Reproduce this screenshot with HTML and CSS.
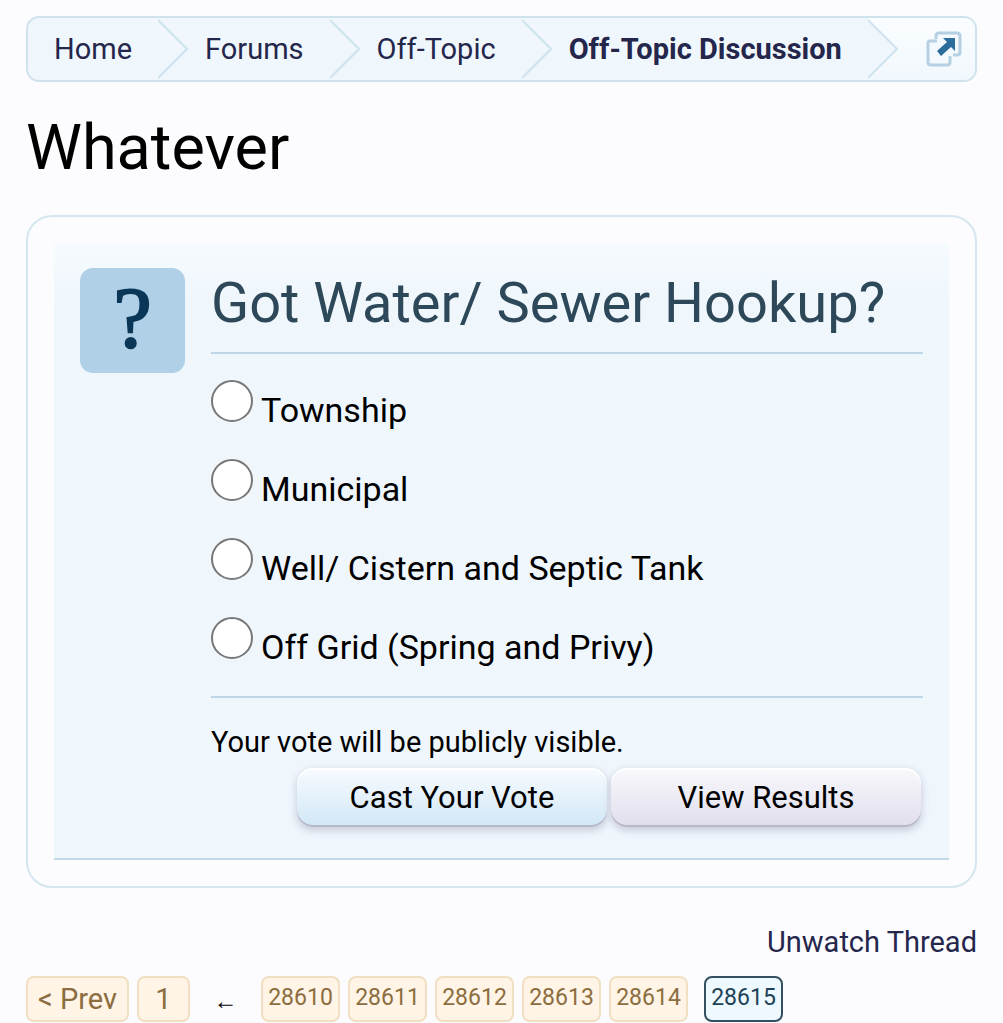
FILE: index.html
```html
<!DOCTYPE html>
<html lang="en">
<head>
    <meta charset="UTF-8">
    <meta name="viewport" content="width=device-width, initial-scale=1.0">
    <title>Whatever</title>
    <link rel="stylesheet" href="styles.css">
</head>
<body>
    <nav class="breadcrumb">
        <a class="crumb" href="#">Home</a>
        <svg class="arrow" viewBox="0 0 30 60"><path d="M0 1 L29 30 L0 59"/></svg>
        <a class="crumb" href="#">Forums</a>
        <svg class="arrow" viewBox="0 0 30 60"><path d="M0 1 L29 30 L0 59"/></svg>
        <a class="crumb" href="#">Off-Topic</a>
        <svg class="arrow" viewBox="0 0 30 60"><path d="M0 1 L29 30 L0 59"/></svg>
        <a class="crumb current" href="#">Off-Topic Discussion</a>
        <div class="jump">
            <svg class="arrow" viewBox="0 0 30 60"><path class="fill" d="M0 0 L29 30 L0 60"/><path d="M0 1 L29 30 L0 59"/></svg>
            <a class="open" href="#" aria-label="Open quick navigation">
                <svg viewBox="0 0 36 36">
                    <path class="pane" d="M10 8 V5 Q10 2 13 2 H31 Q34 2 34 5 V21 Q34 24 31 24 H27"/>
                    <path class="pane" d="M11 10 H4 Q2 10 2 12 V31 Q2 34 5 34 H21 Q24 34 24 31 V25"/>
                    <path class="point" d="M17 7 H29 V20 L25 16 L15 25 L11 20 L21 11 Z"/>
                </svg>
            </a>
        </div>
    </nav>

    <h1>Whatever</h1>

    <section class="panel">
        <form class="poll">
            <div class="question">?</div>
            <div class="content">
                <h2>Got Water/ Sewer Hookup?</h2>
                <div class="options">
                    <label><input type="radio" name="vote" value="1">Township</label>
                    <label><input type="radio" name="vote" value="2">Municipal</label>
                    <label><input type="radio" name="vote" value="3">Well/ Cistern and Septic Tank</label>
                    <label><input type="radio" name="vote" value="4">Off Grid (Spring and Privy)</label>
                </div>
                <p>Your vote will be publicly visible.</p>
                <div class="buttons">
                    <button class="cast" type="button">Cast Your Vote</button>
                    <button type="button">View Results</button>
                </div>
            </div>
        </form>
    </section>

    <div class="links"><a href="#">Unwatch Thread</a></div>

    <nav class="pages">
        <a class="text" href="#">&lt; Prev</a>
        <a class="text first" href="#">1</a>
        <span>←</span>
        <a href="#">28610</a>
        <a href="#">28611</a>
        <a href="#">28612</a>
        <a href="#">28613</a>
        <a href="#">28614</a>
        <a class="active" href="#">28615</a>
    </nav>
</body>
</html>
```
FILE: styles.css
```css
* {
    margin: 0px;
    padding: 0px;
    box-sizing: border-box;
}

body {
    background-color: #fcfcff;
    color: #000;
    font-family: Roboto, "Liberation Sans", sans-serif;
    font-size: 29px;
    padding: 16px 26px 0px;
}

a {
    color: #25264b;
    text-decoration: none;
}

.breadcrumb {
    display: flex;
    align-items: center;
    height: 66px;
    border: 2px solid #d0e3ed;
    border-radius: 13px;
    background-color: #eff6fc;
    overflow: hidden;
}

.crumb {
    padding: 0px 26px 0px 17px;
    white-space: nowrap;
}

.crumb:first-child {
    padding-left: 26px;
}

.current {
    font-weight: bold;
}

.arrow {
    flex: none;
    width: 30px;
    height: 60px;
    fill: none;
    stroke: #cfe3ef;
    stroke-width: 2;
}

.arrow .fill {
    fill: #eff6fc;
    stroke: none;
}

.jump {
    display: flex;
    flex: 1;
    align-items: center;
    justify-content: space-between;
    align-self: stretch;
    padding-right: 13px;
    background: linear-gradient(#fafdff, #f1f8fd);
}

.open svg {
    display: block;
    width: 36px;
    height: 36px;
}

.pane {
    fill: #f3f9fd;
    stroke: #b4d0e2;
    stroke-width: 3;
}

.point {
    fill: #2b6d9b;
}

h1 {
    margin-top: 28px;
    font-size: 63px;
    font-weight: normal;
    line-height: 76px;
}

.panel {
    margin-top: 29px;
    padding: 26px;
    border: 2px solid #d5e7ee;
    border-radius: 26px;
}

.poll {
    display: flex;
    gap: 26px;
    padding: 25px 26px 26px;
    border-bottom: 2px solid #bfd9e6;
    background: linear-gradient(#f5fbfe, #eff6fc 64px);
}

.question {
    flex: none;
    width: 105px;
    height: 105px;
    border-radius: 13px;
    background-color: #b0d0e7;
    color: #0a3657;
    font-family: "Liberation Serif", serif;
    font-size: 86px;
    line-height: 101px;
    text-align: center;
    -webkit-text-stroke: 2px #0a3657;
}

.content {
    flex: 1;
}

h2 {
    padding-bottom: 14px;
    border-bottom: 2px solid #bdd7e7;
    color: #2d4858;
    font-size: 56px;
    font-weight: normal;
    line-height: 70px;
}

.options {
    display: flex;
    flex-direction: column;
    gap: 37px;
    padding: 26px 0px 37px;
    border-bottom: 2px solid #bdd7e7;
}

.options label {
    display: flex;
    align-items: baseline;
    gap: 8px;
    height: 42px;
    font-size: 34px;
    line-height: 42px;
}

.options input {
    flex: none;
    appearance: none;
    width: 42px;
    height: 42px;
    border: 2px solid #777;
    border-radius: 50%;
    background-color: #fff;
}

.options input:checked {
    box-shadow: inset 0px 0px 0px 8px #fff;
    background-color: #2b6d9b;
}

p {
    padding-top: 26px;
    line-height: 36px;
}

.buttons {
    display: flex;
    justify-content: flex-end;
    gap: 4px;
    padding: 8px 2px 5px 0px;
}

button {
    width: 310px;
    height: 59px;
    border: none;
    border-radius: 16px;
    background: linear-gradient(#f9f8fc, #e0deec);
    box-shadow: inset 0px 2px 0px #fff, inset 0px -2px 0px #b8b8c8, 0px 3px 8px #c3c6d6;
    color: #000;
    font-family: inherit;
    font-size: 31px;
}

button.cast {
    background: linear-gradient(#f8fbfe, #d0e7f6);
}

.links {
    margin-top: 35px;
    line-height: 38px;
    text-align: right;
}

.pages {
    display: flex;
    gap: 8px;
    margin-top: 15px;
}

.pages a {
    min-width: 79px;
    height: 46px;
    border: 2px solid #f0dfc3;
    border-radius: 8px;
    background-color: #fff4e5;
    color: #8b6d3f;
    font-size: 23px;
    line-height: 40px;
    text-align: center;
}

.pages .text {
    min-width: 103px;
    font-size: 29px;
    line-height: 42px;
}

.pages .first {
    min-width: 53px;
}

.pages span {
    width: 55px;
    font-family: "Liberation Serif", serif;
    font-size: 24px;
    line-height: 50px;
    text-align: center;
}

.pages .active {
    margin-left: 8px;
    border-color: #344f5f;
    background-color: #eef8ff;
    color: #214256;
}
```
